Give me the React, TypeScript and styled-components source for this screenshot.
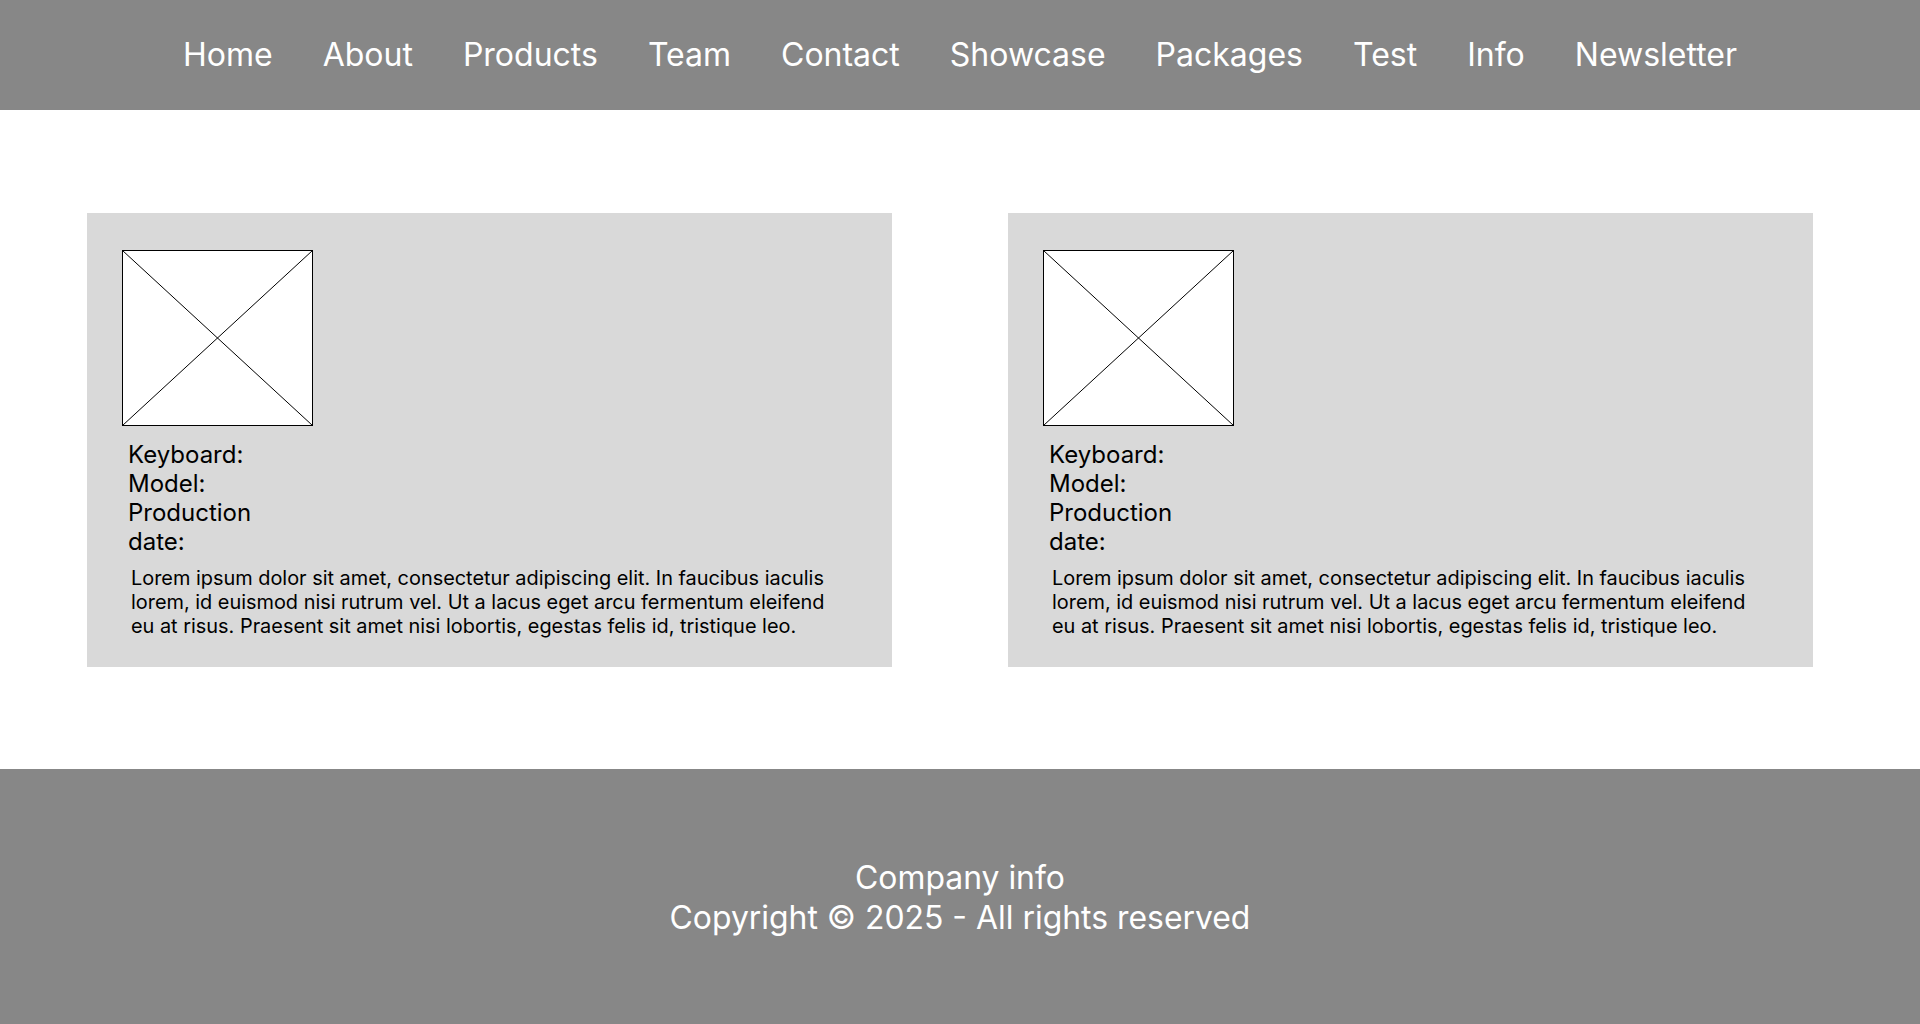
import React from "react";
import styled, { createGlobalStyle } from "styled-components";

const GlobalStyle = createGlobalStyle`
  * { box-sizing: border-box; }
  html, body { margin: 0; padding: 0; background: #ffffff; }
  body { font-family: Inter, "Noto Sans", sans-serif; color: #000; }
`;

const NavBar = styled.nav`
  height: 110px;
  background: #878787;
  display: flex;
  align-items: center;
  justify-content: center;
  gap: 50px;
`;

const NavLink = styled.a`
  color: #ffffff;
  font-size: 32px;
  font-weight: 400;
  text-decoration: none;
  line-height: 1;
`;

const Main = styled.main`
  display: grid;
  grid-template-columns: 805px 805px;
  column-gap: 116px;
  padding: 103px 107px 102px 87px;
`;

const Card = styled.section`
  background: #d9d9d9;
  height: 454px;
  padding: 37px 35px 0 35px;
  display: flex;
  flex-direction: column;
  align-items: flex-start;
`;

const Placeholder = styled.svg`
  display: block;
  width: 191px;
  height: 176px;
  background: #ffffff;
`;

const Specs = styled.div`
  width: 180px;
  margin-top: 14px;
  padding-left: 6px;
  font-size: 24px;
  line-height: 29px;
`;

const Description = styled.p`
  margin: 10px 0 0 9px;
  width: 705px;
  font-size: 19.9px;
  line-height: 24px;
`;

const Footer = styled.footer`
  height: 255px;
  background: #878787;
  display: flex;
  flex-direction: column;
  align-items: center;
  justify-content: center;
  padding-top: 2px;
  color: #ffffff;
  font-size: 31.9px;
  line-height: 40px;
`;

const links = ["Home", "About", "Products", "Team", "Contact", "Showcase", "Packages", "Test", "Info", "Newsletter"];

const lorem =
  "Lorem ipsum dolor sit amet, consectetur adipiscing elit. In faucibus iaculis lorem, id euismod nisi rutrum vel. Ut a lacus eget arcu fermentum eleifend eu at risus. Praesent sit amet nisi lobortis, egestas felis id, tristique leo.";

function ImageBox() {
  return (
    <Placeholder viewBox="0 0 191 176" preserveAspectRatio="none">
      <rect x="0.5" y="0.5" width="190" height="175" fill="#fff" stroke="#000" strokeWidth="1" />
      <line x1="0.5" y1="0.5" x2="190.5" y2="175.5" stroke="#000" strokeWidth="1" />
      <line x1="190.5" y1="0.5" x2="0.5" y2="175.5" stroke="#000" strokeWidth="1" />
    </Placeholder>
  );
}

function ProductCard() {
  return (
    <Card>
      <ImageBox />
      <Specs>
        Keyboard:
        <br />
        Model:
        <br />
        Production date:
      </Specs>
      <Description>{lorem}</Description>
    </Card>
  );
}

export default function App() {
  return (
    <>
      <GlobalStyle />
      <NavBar>
        {links.map((l) => (
          <NavLink key={l} href="#">
            {l}
          </NavLink>
        ))}
      </NavBar>
      <Main>
        <ProductCard />
        <ProductCard />
      </Main>
      <Footer>
        <div>Company info</div>
        <div>Copyright © 2025 - All rights reserved</div>
      </Footer>
    </>
  );
}
